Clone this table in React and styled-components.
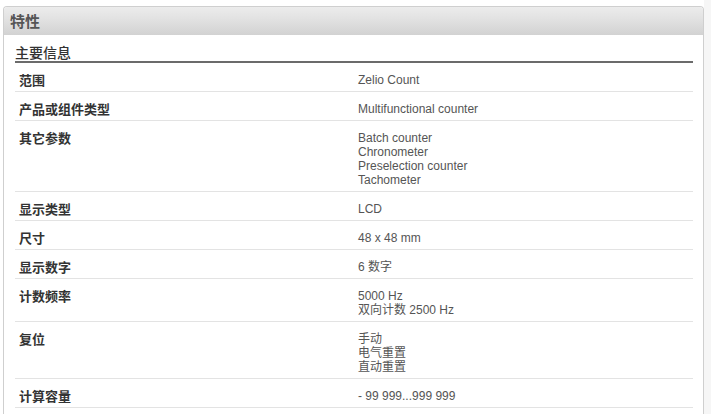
import styled, { createGlobalStyle } from 'styled-components';

const GlobalStyle = createGlobalStyle`
  html, body {
    margin: 0;
    padding: 0;
    background: #fff;
    font-family: "Liberation Sans", Arial, "Noto Sans CJK SC", sans-serif;
  }
`;

const Page = styled.div`
  display: flex;
  width: 711px;
  height: 414px;
  overflow: hidden;
`;

const Main = styled.div`
  flex: 1;
  padding: 6px 0 0 3px;
`;

const Scrollbar = styled.div`
  width: 7px;
  background: #f6f6f6;
`;

const Panel = styled.section`
  border: 1px solid #cfcfcf;
  border-bottom: none;
  border-radius: 4px 4px 0 0;
  height: 100%;
  box-sizing: border-box;
`;

const PanelHeader = styled.h2`
  margin: 0;
  height: 28px;
  line-height: 28px;
  padding-left: 6px;
  font-size: 15px;
  font-weight: bold;
  color: #555;
  font-family: "Noto Sans CJK SC", sans-serif;
  background: linear-gradient(to bottom, #ececec 0%, #e0e0e0 50%, #d2d2d2 100%);
  border-radius: 3px 3px 0 0;
`;

const Body = styled.div`
  padding: 0 10px 0 11px;
`;

const SectionTitle = styled.h3`
  margin: 8px 0 0;
  font-size: 14px;
  font-weight: 500;
  line-height: 18px;
  color: #333;
  font-family: "Noto Sans CJK SC", sans-serif;
  border-bottom: 2px solid #6b6b6b;
`;

const Row = styled.div`
  display: grid;
  grid-template-columns: 1fr 1fr;
  border-bottom: 1px solid #e3e3e3;
  padding: 10px 0 4px;
  font-size: 12px;
  line-height: 14px;
`;

const Label = styled.div`
  padding-left: 4px;
  font-size: 13px;
  font-weight: bold;
  color: #333;
  font-family: "Noto Sans CJK SC", sans-serif;
`;

const Value = styled.div`
  padding-left: 4px;
  color: #555;
  font-family: "Liberation Sans", Arial, "Noto Sans CJK SC", sans-serif;
`;

const Line = styled.div`
  white-space: nowrap;
`;

const specs = [
  ['范围', ['Zelio Count']],
  ['产品或组件类型', ['Multifunctional counter']],
  ['其它参数', ['Batch counter', 'Chronometer', 'Preselection counter', 'Tachometer']],
  ['显示类型', ['LCD']],
  ['尺寸', ['48 x 48 mm']],
  ['显示数字', ['6 数字']],
  ['计数频率', ['5000 Hz', '双向计数 2500 Hz']],
  ['复位', ['手动', '电气重置', '直动重置']],
  ['计算容量', ['- 99 999...999 999']],
];

export default function App() {
  return (
    <>
      <GlobalStyle />
      <Page>
        <Main>
          <Panel>
            <PanelHeader>特性</PanelHeader>
            <Body>
              <SectionTitle>主要信息</SectionTitle>
              {specs.map(([label, values]) => (
                <Row key={label}>
                  <Label>{label}</Label>
                  <Value>
                    {values.map((v) => (
                      <Line key={v}>{v}</Line>
                    ))}
                  </Value>
                </Row>
              ))}
            </Body>
          </Panel>
        </Main>
        <Scrollbar />
      </Page>
    </>
  );
}
